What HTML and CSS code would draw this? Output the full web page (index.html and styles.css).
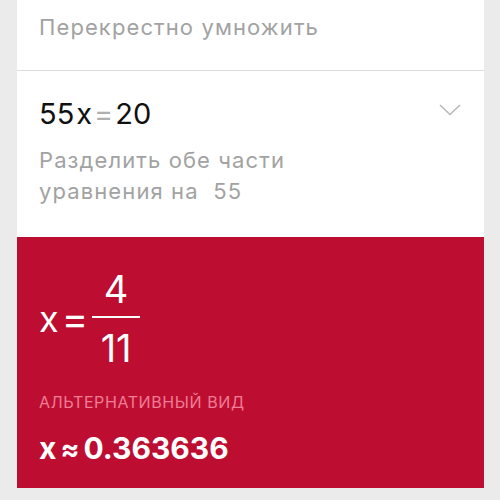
FILE: index.html
```html
<!DOCTYPE html>
<html lang="ru">

<head>
  <meta charset="UTF-8">
  <meta name="viewport" content="width=device-width, initial-scale=1.0">
  <title>Решение</title>
  <link rel="stylesheet" href="styles.css">
</head>

<body>
  <div class="page">
    <div class="step step-top">
      <div class="hint">Перекрестно умножить</div>
    </div>
    <div class="step">
      <div class="step-head">
        <div class="expr">55<span class="var">x</span><span class="op">=</span>20</div>
        <svg class="chevron" width="22" height="12" viewBox="0 0 22 12">
          <path d="M1 1 L11 10.5 L21 1" fill="none" stroke="#b8b8b8" stroke-width="1.6" />
        </svg>
      </div>
      <div class="hint">Разделить обе части<br>уравнения на&nbsp; 55</div>
    </div>
    <div class="result">
      <div class="answer">
        <span class="var">x</span><span class="op">=</span>
        <span class="frac">
          <span class="num">4</span>
          <span class="den">11</span>
        </span>
      </div>
      <div class="alt-label">АЛЬТЕРНАТИВНЫЙ ВИД</div>
      <div class="alt-value">x<span class="approx">≈</span>0.363636</div>
    </div>
  </div>
</body>

</html>
```

FILE: styles.css
```css
* {
  padding: 0;
  margin: 0;
  box-sizing: border-box;
}

body {
  background: #ebebeb;
  font-family: Inter, Roboto, "Noto Sans", sans-serif;
  width: 500px;
  height: 500px;
  overflow: hidden;
}

.page {
  width: 467px;
  margin-left: 17px;
}

.step {
  background: #fff;
  padding: 26px 22px 0 22px;
  height: 167px;
  border-top: 1px solid #dcdcdc;
}

.step-top {
  height: 70px;
  border-top: none;
  padding-top: 12px;
}

.hint {
  color: #a2a2a2;
  font-size: 22px;
  line-height: 31px;
  letter-spacing: 1.1px;
}

.step-head {
  display: flex;
  justify-content: space-between;
  align-items: flex-start;
  margin-bottom: 14px;
}

.expr {
  font-size: 29px;
  line-height: 34px;
  color: #111;
}

.expr .var {
  margin-left: 2px;
}

.expr .op {
  color: #b0b0b0;
  margin: 0 2px;
}

.chevron {
  margin-top: 7px;
  margin-right: 1px;
}

.result {
  background: #bd0d31;
  color: #fff;
  height: 251px;
  padding: 32px 22px 0 22px;
}

.answer {
  display: flex;
  align-items: center;
}

.answer .var {
  font-size: 36px;
}

.answer .op {
  font-size: 40px;
  margin: 0 4px 0 3px;
}

.frac {
  display: flex;
  flex-direction: column;
  align-items: center;
}

.num {
  font-size: 38px;
  line-height: 40px;
  padding-bottom: 7px;
  border-bottom: 2px solid #fff;
  width: 48px;
  text-align: center;
}

.den {
  font-size: 38px;
  line-height: 40px;
  padding-top: 10px;
}

.alt-label {
  color: #ef7d95;
  font-size: 16px;
  line-height: 20px;
  letter-spacing: 0.6px;
  margin-top: 24px;
}

.alt-value {
  font-size: 30px;
  line-height: 36px;
  font-weight: 700;
  margin-top: 18px;
}

.approx {
  font-size: 28px;
  margin: 0 4px;
}
```
